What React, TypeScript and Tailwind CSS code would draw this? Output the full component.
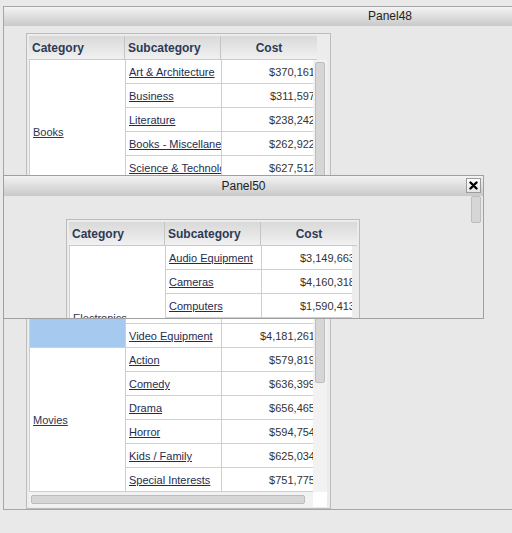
import { Fragment } from 'react';

type Row = { sub: string; cost: string };
type Group = { category: string; rows: Row[]; selected?: boolean };

const mainGroups: Group[] = [
  {
    category: 'Books',
    rows: [
      { sub: 'Art & Architecture', cost: '$370,161' },
      { sub: 'Business', cost: '$311,597' },
      { sub: 'Literature', cost: '$238,242' },
      { sub: 'Books - Miscellaneous', cost: '$262,922' },
      { sub: 'Science & Technology', cost: '$627,512' },
      { sub: 'Travel', cost: '$384,105' },
    ],
  },
  {
    category: 'Electronics',
    selected: true,
    rows: [
      { sub: 'Audio Equipment', cost: '$3,149,663' },
      { sub: 'Cameras', cost: '$4,160,318' },
      { sub: 'Computers', cost: '$1,590,413' },
      { sub: 'Electronics - Misc', cost: '$1,402,270' },
      { sub: 'TV\'s', cost: '$2,817,536' },
      { sub: 'Video Equipment', cost: '$4,181,261' },
    ],
  },
  {
    category: 'Movies',
    rows: [
      { sub: 'Action', cost: '$579,819' },
      { sub: 'Comedy', cost: '$636,399' },
      { sub: 'Drama', cost: '$656,465' },
      { sub: 'Horror', cost: '$594,754' },
      { sub: 'Kids / Family', cost: '$625,034' },
      { sub: 'Special Interests', cost: '$751,775' },
    ],
  },
];

const popupGroups: Group[] = [{ ...mainGroups[1], selected: false }];

const Header = () => (
  <div className="flex h-[24px] w-[288px] shrink-0 bg-gradient-to-b from-[#d9d9d9] to-[#f1f1f1] border-b border-[#c9c9c9] text-[12px] font-bold text-[#2c3a57]">
    <div className="w-[96px] px-[3px] flex items-center border-r border-[#c4c4c4]">Category</div>
    <div className="w-[96px] px-[3px] flex items-center border-r border-[#c4c4c4]">Subcategory</div>
    <div className="w-[96px] flex items-center justify-center">Cost</div>
  </div>
);

const Body = ({ groups }: { groups: Group[] }) => (
  <div className="w-[288px] text-[11px]">
    {groups.map((g) => (
      <div key={g.category} className="flex">
        <div
          className={`w-[96px] shrink-0 px-[3px] pt-[2px] flex items-center border-r border-b border-[#cfcfcf] ${
            g.selected ? 'bg-[#a6caef]' : 'bg-white'
          }`}
        >
          <span className="underline text-[#2a3656]">{g.category}</span>
        </div>
        <div className="flex flex-col">
          {g.rows.map((r) => (
            <Fragment key={r.sub}>
              <div className="flex h-[24px] bg-white border-b border-[#cfcfcf]">
                <div className="w-[96px] shrink-0 px-[3px] pt-[2px] flex items-center border-r border-[#cfcfcf] overflow-hidden whitespace-nowrap">
                  <span className="underline text-[#1f2d4f]">{r.sub}</span>
                </div>
                <div className="w-[96px] shrink-0 pr-[3px] pt-[2px] flex items-center justify-end text-[#333] whitespace-nowrap">
                  {r.cost}
                </div>
              </div>
            </Fragment>
          ))}
        </div>
      </div>
    ))}
  </div>
);

export default function App() {
  return (
    <div className="relative w-[512px] h-[533px] overflow-hidden bg-[#e9e9e9] pt-[6px] pl-[3px] font-['Liberation_Sans',Arial,sans-serif] text-[#222]">
      {/* Panel48 */}
      <div className="w-[774px] h-[504px] border border-[#a6a6a6] bg-[#e8e8e8] flex flex-col">
        <div className="h-[19px] shrink-0 bg-gradient-to-b from-[#f3f3f3] to-[#c9c9c9] text-center text-[12px] leading-[19px] text-[#222]">
          Panel48
        </div>
        <div className="pl-[22px] pt-[7px]">
          <div className="w-[305px] h-[476px] border border-[#bcbcbc] bg-[#ececec] pt-[2px] px-[2px] flex flex-col">
            <Header />
            <div className="flex h-[432px] shrink-0">
              <div className="w-[284px] overflow-hidden border-l border-[#cfcfcf]">
                <Body groups={mainGroups} />
              </div>
              <div className="w-[14px] bg-[#f2f2f2] pt-[2px] pl-[2px]">
                <div className="w-[10px] h-[321px] rounded-[2px] border border-[#bdbdbd] bg-[#d6d6d6]" />
              </div>
            </div>
            <div className="flex h-[15px] shrink-0">
              <div className="w-[284px] bg-[#f2f2f2] pt-[3px] pl-[2px]">
                <div className="w-[274px] h-[9px] rounded-[2px] border border-[#bdbdbd] bg-[#d6d6d6]" />
              </div>
              <div className="w-[14px] bg-white" />
            </div>
          </div>
        </div>
      </div>

      {/* Panel50 floating window */}
      <div className="absolute left-[3px] top-[175px] w-[481px] h-[144px] border border-[#a0a0a0] bg-[#e8e8e8] flex flex-col">
        <div className="relative h-[20px] shrink-0 bg-gradient-to-b from-[#f3f3f3] to-[#c9c9c9] text-center text-[12px] leading-[20px] text-[#222]">
          Panel50
          <button
            aria-label="Close"
            className="absolute right-[2px] top-[2px] w-[15px] h-[15px] border border-[#9a9a9a] bg-gradient-to-b from-white to-[#e4e4e4] flex items-center justify-center"
          >
            <svg width="9" height="9" viewBox="0 0 9 9">
              <path d="M1.5 1.5L7.5 7.5M7.5 1.5L1.5 7.5" stroke="#000" strokeWidth="2.4" strokeLinecap="round" />
            </svg>
          </button>
        </div>
        <div className="flex flex-1 overflow-hidden">
          <div className="flex-1 overflow-hidden pl-[62px] pt-[23px]">
            <div className="w-[294px] border border-[#bcbcbc] bg-[#ececec] pt-[2px] px-[2px]">
              <Header />
              <div className="flex">
                <div className="w-[283px] overflow-hidden border-l border-[#cfcfcf]">
                  <Body groups={popupGroups} />
                </div>
                <div className="w-[5px] bg-[#ececec]" />
              </div>
            </div>
          </div>
          <div className="w-[13px] shrink-0 pl-[1px]">
            <div className="w-[10px] h-[27px] rounded-[2px] border border-[#bdbdbd] bg-[#d6d6d6]" />
          </div>
        </div>
      </div>
    </div>
  );
}
